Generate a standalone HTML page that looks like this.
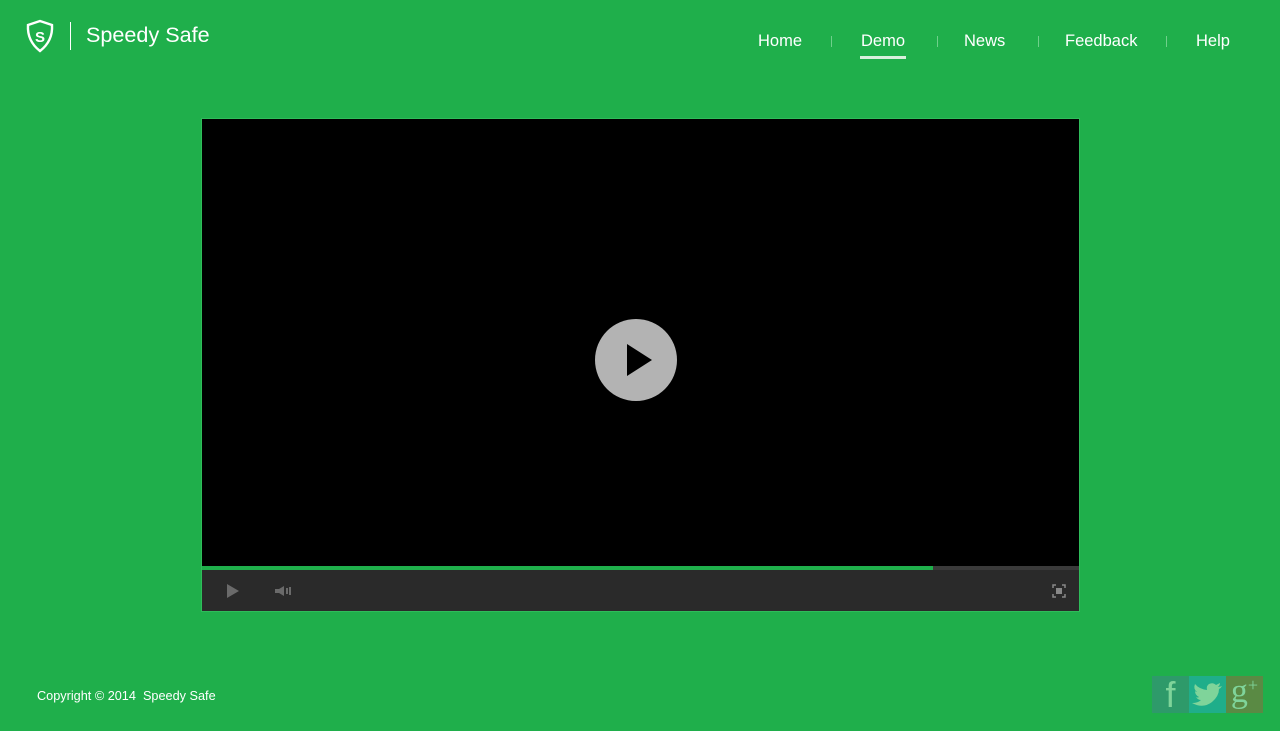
<!DOCTYPE html>
<html><head><meta charset="utf-8"><style>
*{margin:0;padding:0;box-sizing:border-box}
body{width:1280px;height:731px;background:#1faf4b;font-family:"Liberation Sans",sans-serif;color:#fff;position:relative;overflow:hidden}
.logo{position:absolute;left:25px;top:19px}
.vbar{position:absolute;left:70px;top:22px;width:1px;height:28px;background:#fff}
.brand{position:absolute;left:86px;top:22px;font-size:21.6px}
.nav a{position:absolute;top:32px;font-size:16.5px;color:#fff;text-decoration:none}
.sep{position:absolute;top:36px;width:1px;height:11px;background:#6fd08b}
.ul{position:absolute;left:860px;top:56px;width:46px;height:3px;background:#d8f0dc}
.video{position:absolute;left:201px;top:118px;width:879px;height:494px;background:#000;border:1px solid #2ebd5a}
.prog{position:absolute;left:0;top:447px;width:877px;height:4px;background:#3a3a3a}
.prog div{width:731px;height:4px;background:#1faf4b}
.ctrl{position:absolute;left:0;top:451px;width:877px;height:41px;background:#2a2a2a}
.play{position:absolute;left:393px;top:200px;width:82px;height:82px;border-radius:50%;background:#b3b3b3}
.copy{position:absolute;left:37px;top:689px;font-size:12.7px;white-space:pre}
.soc{position:absolute;top:676px;width:37px;height:37px;font-family:"Liberation Serif",serif;color:#7fd49a;text-align:center}
</style></head><body>
<svg class="logo" width="30" height="34" viewBox="0 0 30 34"><path d="M15 2 L27 6 Q28 22 15 32 Q2 22 3 6 Z" fill="none" stroke="#fff" stroke-width="2.4"/><text x="15" y="23" font-size="15" font-family="Liberation Sans" fill="#fff" text-anchor="middle" font-weight="bold">S</text></svg>
<div class="vbar"></div>
<div class="brand">Speedy Safe</div>
<div class="nav">
<a style="left:758px">Home</a><div class="sep" style="left:831px"></div>
<a style="left:861px">Demo</a><div class="sep" style="left:937px"></div>
<a style="left:964px">News</a><div class="sep" style="left:1038px"></div>
<a style="left:1065px">Feedback</a><div class="sep" style="left:1166px"></div>
<a style="left:1196px">Help</a>
</div>
<div class="ul"></div>
<div class="video">
<div class="play"><svg width="82" height="82"><path d="M32 25 L57 41 L32 57 Z" fill="#000"/></svg></div>
<div class="prog"><div></div></div>
<div class="ctrl">
<svg style="position:absolute;left:24px;top:14px" width="14" height="14"><path d="M1 0 L13 7 L1 14Z" fill="#6a6a6a"/></svg>
<svg style="position:absolute;left:72px;top:15px" width="20" height="12"><path d="M1 4 H5 L10 1 V11 L5 8 H1Z" fill="#6a6a6a"/><rect x="12" y="3" width="2" height="6" fill="#6a6a6a"/><rect x="15" y="2" width="2" height="8" fill="#6a6a6a"/></svg>
<svg style="position:absolute;left:850px;top:14px" width="14" height="14"><path d="M1 4V1H4M10 1H13V4M13 10V13H10M4 13H1V10" fill="none" stroke="#888" stroke-width="1.5"/><rect x="4" y="4" width="6" height="6" fill="#888"/></svg>
</div>
</div>
<div class="copy">Copyright © 2014  Speedy Safe</div>
<div class="soc" style="left:1152px;background:#2e9a6a;font-size:36px;line-height:38px;font-family:'Liberation Sans',sans-serif">f</div>
<div class="soc" style="left:1189px;background:#1fae8a"><svg width="37" height="37" viewBox="0 0 37 37"><path d="M33 10 Q30 11 29 11 Q31 9 31 7 Q29 8 27 9 Q24 6 20 8 Q17 10 18 14 Q10 13 6 8 Q4 13 8 16 Q7 16 6 15 Q6 19 10 21 Q9 22 7 21 Q9 24 12 24 Q9 27 3 27 Q14 33 23 26 Q30 20 30 13 Q32 12 33 10Z" fill="#7fd49a"/></svg></div>
<div class="soc" style="left:1226px;background:#5a8a44;font-size:34px;line-height:32px">g<span style="font-size:18px;vertical-align:top;line-height:18px">+</span></div>
</body></html>
